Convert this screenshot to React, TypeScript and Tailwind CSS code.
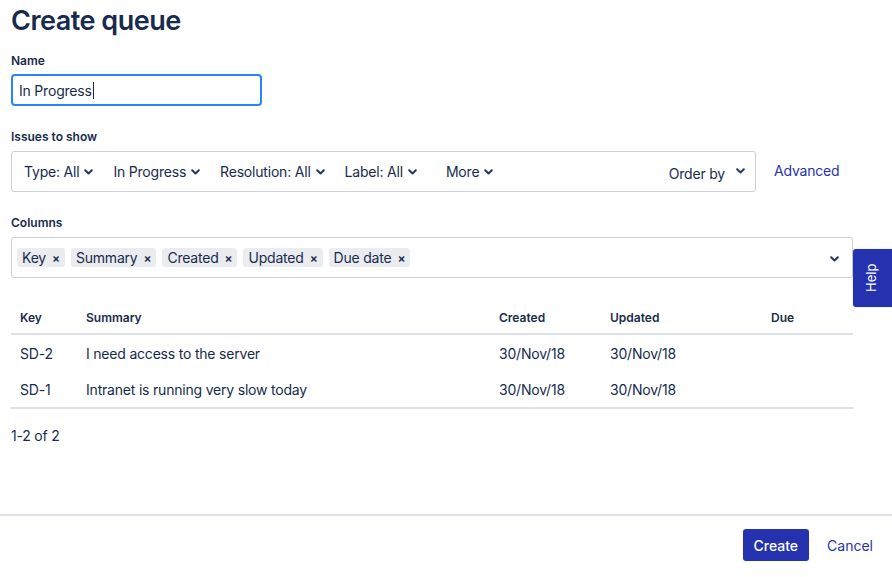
const Chevron = ({ className = "" }: { className?: string }) => (
  <svg className={className} width="9" height="6" viewBox="0 0 9 6" fill="none">
    <path d="M1.2 1.2L4.5 4.5L7.8 1.2" stroke="#253858" strokeWidth="2" strokeLinecap="round" strokeLinejoin="round" />
  </svg>
)

const filters = ["Type: All", "In Progress", "Resolution: All", "Label: All"]
const tags = ["Key", "Summary", "Created", "Updated", "Due date"]
const rows = [
  { key: "SD-2", summary: "I need access to the server", created: "30/Nov/18", updated: "30/Nov/18" },
  { key: "SD-1", summary: "Intranet is running very slow today", created: "30/Nov/18", updated: "30/Nov/18" },
]

export default function App() {
  return (
    <div className="relative flex h-[577px] w-[892px] flex-col overflow-hidden bg-white font-['Inter',sans-serif] text-[#172B4D]">
      <div className="px-[11px] pt-[3px]">
        <h1 className="text-[27px] font-semibold leading-[36px] tracking-[-0.5px]">Create queue</h1>

        <label className="mt-[14px] block text-[12px] font-semibold leading-[16px]">Name</label>
        <div className="mt-[5px] flex h-[32px] w-[251px] items-center rounded-[4px] border-2 border-[#2684FF] px-[6px] text-[14px] tracking-[-0.2px]">
          In Progress<span className="ml-px h-[17px] w-px bg-[#172B4D]" />
        </div>

        <label className="mt-[23px] block text-[12px] font-semibold leading-[16px]">Issues to show</label>
        <div className="mt-[6px] flex items-center gap-[18px]">
          <div className="flex h-[41px] w-[745px] items-center rounded-[3px] border border-[#cdd0d6] pl-[12px] pr-[10px] text-[14px] tracking-[-0.2px]">
            <div className="flex items-center gap-[20px]">
              {filters.map((f) => (
                <span key={f} className="flex items-center gap-[5px]">
                  {f}
                  <Chevron />
                </span>
              ))}
              <span className="ml-[9px] flex items-center gap-[5px]">
                More
                <Chevron />
              </span>
            </div>
            <span className="ml-auto mt-[3px] flex items-center gap-[11px]">
              Order by
              <Chevron className="-mt-[4px]" />
            </span>
          </div>
          <a className="-mt-[2px] text-[14px] tracking-[-0.2px] text-[#2532B0]">Advanced</a>
        </div>

        <label className="mt-[23px] block text-[12px] font-semibold leading-[16px]">Columns</label>
        <div className="mt-[6px] flex h-[41px] w-[842px] items-center rounded-[3px] border border-[#cdd0d6] pl-[5px] pr-[13px] text-[14px] tracking-[-0.2px]">
          <div className="flex items-center gap-[6px]">
            {tags.map((t) => (
              <span key={t} className="flex h-[19px] items-center gap-[6px] rounded-[3px] bg-[#EBECF0] px-[5px]">
                {t}
                <span className="text-[12px] font-semibold">×</span>
              </span>
            ))}
          </div>
          <Chevron className="ml-auto mt-[3px]" />
        </div>

        <div className="mt-[24px] w-[842px]">
          <div className="grid h-[33px] grid-cols-[66px_413px_111px_161px_1fr] items-center border-b-2 border-[#DFE1E6] pl-[9px] text-[12px] font-semibold">
            <span>Key</span>
            <span>Summary</span>
            <span>Created</span>
            <span>Updated</span>
            <span>Due</span>
          </div>
          <div className="border-b-2 border-[#DFE1E6]">
            {rows.map((r) => (
              <div key={r.key} className="grid h-[36px] grid-cols-[66px_413px_111px_161px_1fr] items-center pl-[9px] text-[14px] tracking-[-0.2px]">
                <span>{r.key}</span>
                <span>{r.summary}</span>
                <span>{r.created}</span>
                <span>{r.updated}</span>
                <span></span>
              </div>
            ))}
          </div>
        </div>

        <p className="mt-[17px] text-[14px] leading-[20px] tracking-[-0.2px]">1-2 of 2</p>
      </div>

      <div className="flex-1" />

      <div className="flex h-[63px] items-start justify-end gap-[10px] border-t-2 border-[#DFE1E6] pr-[11px] pt-[13px]">
        <button className="h-[32px] rounded-[3px] bg-[#2532B0] px-[11px] text-[14px] font-medium text-white">Create</button>
        <button className="h-[32px] px-[8px] text-[14px] text-[#2532B0]">Cancel</button>
      </div>

      <div className="absolute left-[853px] top-[249px] flex h-[58px] w-[39px] items-center justify-center rounded-l-[3px] bg-[#2532B0] bg-[radial-gradient(#6e7a55_0.6px,transparent_0.7px)] bg-[length:4px_4px] shadow-[0_0_2px_rgba(0,0,0,0.2)]">
        <span className="-rotate-90 text-[13px] text-white">Help</span>
      </div>
    </div>
  )
}
